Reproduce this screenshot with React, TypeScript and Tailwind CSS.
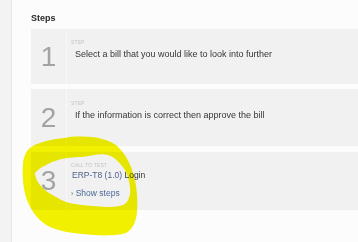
function NumberCol({ n }: { n: number }) {
  return (
    <div className="w-[36px] shrink-0 flex items-center justify-center border-r border-[#f8f8f8]">
      <span className="text-[28px] leading-none font-light text-[#a3a3a3]">{n}</span>
    </div>
  );
}

export default function App() {
  return (
    <div
      className="relative w-[358px] h-[242px] overflow-hidden flex bg-[#fcfcfc]"
      style={{ fontFamily: '"Liberation Sans", Arial, sans-serif' }}
    >
      {/* side rail */}
      <div className="w-[12px] shrink-0 bg-[#f3f3f4] border-r border-[#e7e7e9]" />

      <div className="flex-1 pl-[19px] pt-[12px]">
        <h2 className="text-[9px] leading-[12px] font-bold text-[#2a2a2a]">Steps</h2>

        <div className="mt-[5px] flex flex-col gap-[5px]">
          <div className="h-[55px] flex bg-[#f1f1f1]">
            <NumberCol n={1} />
            <div className="flex flex-col pt-[10px] pl-[4px]">
              <span className="text-[5px] leading-[6px] tracking-wide text-[#c4c4c4]">STEP</span>
              <span className="mt-[4px] pl-[4px] text-[9px] leading-[11px] text-[#363636]">
                Select a bill that you would like to look into further
              </span>
            </div>
          </div>

          <div className="h-[57px] flex bg-[#f1f1f1]">
            <NumberCol n={2} />
            <div className="flex flex-col pt-[11px] pl-[4px]">
              <span className="text-[5px] leading-[6px] tracking-wide text-[#c4c4c4]">STEP</span>
              <span className="mt-[4px] pl-[4px] text-[9px] leading-[11px] text-[#363636]">
                If the information is correct then approve the bill
              </span>
            </div>
          </div>

          <div className="h-[58px] mt-[1px] flex bg-[#f1f1f1]">
            <NumberCol n={3} />
            <div className="flex flex-col pt-[10px] pl-[4px]">
              <span className="text-[5px] leading-[6px] tracking-wide text-[#c4c4c4]">CALL TO TEST</span>
              <span className="mt-[2px] pl-[1px] text-[8.5px] leading-[11px] text-[#363636]">
                <span className="text-[#4e5f8d]">ERP-T8 (1.0)</span> Login
              </span>
              <span className="mt-[7px] text-[8.5px] leading-[11px] text-[#4a6898]">
                <span className="text-[7px] text-[#777]">›</span> Show steps
              </span>
            </div>
          </div>
        </div>
      </div>

      {/* highlighter annotation */}
      <svg
        className="absolute inset-0 pointer-events-none mix-blend-multiply"
        width="358"
        height="242"
        viewBox="0 0 358 242"
      >
        <path
          fillRule="evenodd"
          fill="#f4f300"
          d="M65 138 C72 136 92 136 102 139 C110 141 116 144 120 149 C126 155 131 165 134 176 C137 188 138 200 137 212 C136 222 133 229 126 233 C118 236 100 236 82 234 C70 233 60 231 50 227 C40 222 32 213 27 200 C23 189 22 175 23 163 C24 155 27 149 33 146 C40 142 52 139 65 138 Z
             M35 173 C39 168 44 166 50 163 C58 159 70 157 82 157 C92 156 100 153 108 155 C115 157 120 163 125 170 C129 178 131 188 130 194 C129 199 127 203 123 205 C116 208 100 207 82 205 C72 204 64 202 58 198 C50 194 44 190 40 185 C37 181 35 177 35 173 Z"
        />
      </svg>
    </div>
  );
}
